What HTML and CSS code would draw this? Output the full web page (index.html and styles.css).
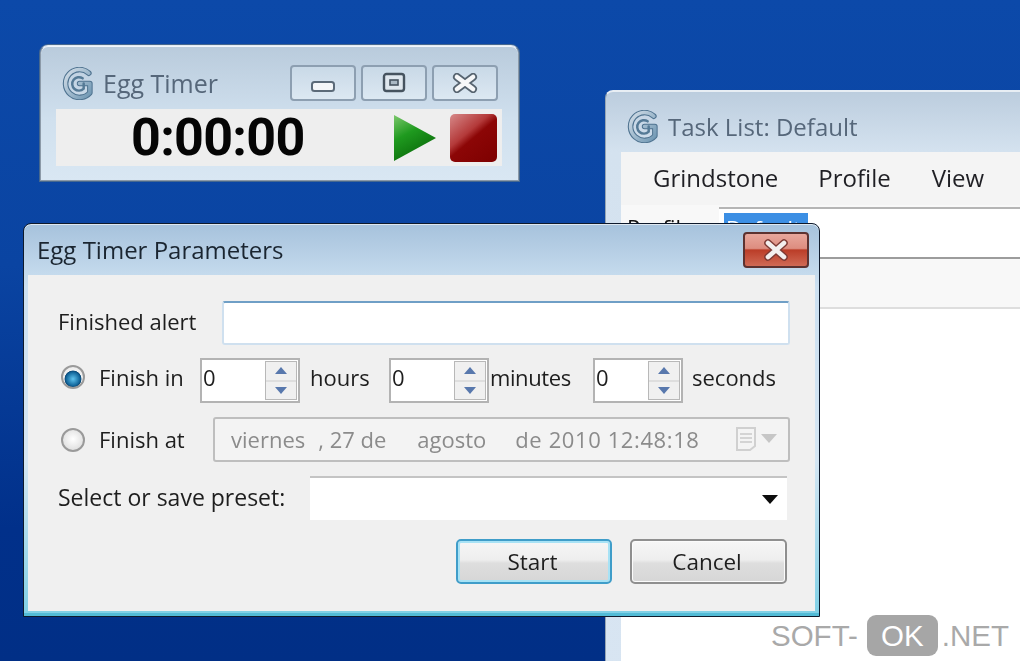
FILE: index.html
```html
<!DOCTYPE html>
<html lang="es">
<head>
  <meta charset="UTF-8">
  <title>Egg Timer Parameters</title>
  <link rel="stylesheet" href="styles.css">
</head>
<body>
  <svg class="defs" width="0" height="0">
    <defs>
      <linearGradient id="logo-fill" x1="0" y1="0" x2="1" y2="1">
        <stop offset="0" stop-color="#d3dee8"/>
        <stop offset="1" stop-color="#6f97b3"/>
      </linearGradient>
      <linearGradient id="play-fill" x1="0" y1="0" x2="0.5" y2="1">
        <stop offset="0" stop-color="#7cc86c"/>
        <stop offset="0.45" stop-color="#1f9a1f"/>
        <stop offset="1" stop-color="#0a6a0a"/>
      </linearGradient>
      <symbol id="logo" viewBox="0 0 30 32">
        <g fill="none" stroke-linecap="round" stroke-linejoin="round">
          <path d="M26 6 A13.5 13.5 0 1 0 27 25 L27 16 L17 16" stroke="#4f7390" stroke-width="5.4"/>
          <path d="M26 6 A13.5 13.5 0 1 0 27 25 L27 16 L17 16" stroke="url(#logo-fill)" stroke-width="3.4"/>
          <path d="M20 11 A6.5 6.5 0 1 0 21 21 L21 16" stroke="#557a96" stroke-width="2.4"/>
        </g>
      </symbol>
    </defs>
  </svg>

  <section class="window egg-window">
    <div class="egg-head">
      <svg class="logo"><use href="#logo"/></svg>
      <span class="win-title">Egg Timer</span>
      <div class="caption-btns">
        <div class="caption-btn"><svg class="icon-min" width="26" height="14" viewBox="0 0 26 14"><rect x="2" y="3" width="22" height="9" rx="2.5" fill="#f4f6f8" stroke="#5b6a78" stroke-width="2"/></svg></div>
        <div class="caption-btn"><svg width="26" height="22" viewBox="0 0 26 22"><rect x="3" y="2" width="20" height="17" rx="2.5" fill="#dfe7ee" stroke="#46535f" stroke-width="2.4"/><rect x="9" y="8" width="8" height="5" fill="#aab8c4" stroke="#46535f" stroke-width="1.6"/></svg></div>
        <div class="caption-btn"><svg width="28" height="20" viewBox="0 0 28 20"><path d="M6 4 L22 16 M22 4 L6 16" stroke="#56636f" stroke-width="8" stroke-linecap="round"/><path d="M6 4 L22 16 M22 4 L6 16" stroke="#f6f7f8" stroke-width="4.6" stroke-linecap="round"/></svg></div>
      </div>
    </div>
    <div class="egg-display">
      <span class="clock">0:00:00</span>
      <svg class="play" width="44" height="48" viewBox="0 0 44 48"><path d="M1 1 L43 24 L1 47 Z" fill="url(#play-fill)"/></svg>
      <div class="stop"></div>
    </div>
  </section>

  <section class="window task-window">
    <div class="task-head">
      <svg class="logo"><use href="#logo"/></svg>
      <span class="win-title">Task List: Default</span>
    </div>
    <div class="task-inner">
      <div class="menu">
        <span class="menu-a">Grindstone</span>
        <span class="menu-b">Profile</span>
        <span class="menu-c">View</span>
      </div>
      <div class="profile-row">
        <span class="profile-label">Profile:</span>
        <div class="profile-input"><span class="profile-sel">Default</span></div>
      </div>
      <div class="task-strip"></div>
      <div class="task-list"></div>
    </div>
  </section>

  <section class="window dialog">
    <div class="dialog-head">
      <span class="dialog-title">Egg Timer Parameters</span>
      <div class="close-btn">
        <svg width="28" height="22" viewBox="0 0 28 22"><path d="M6 4 L22 18 M22 4 L6 18" stroke="#7d3a34" stroke-width="7.5" stroke-linecap="round"/><path d="M6 4 L22 18 M22 4 L6 18" stroke="#f3efee" stroke-width="4.6" stroke-linecap="round"/></svg>
      </div>
    </div>
    <div class="dialog-body">
      <div class="row row-alert">
        <label class="label-alert">Finished alert</label>
        <div class="text-input"></div>
      </div>
      <div class="row row-in">
        <span class="radio radio-on"></span>
        <label class="label-finish">Finish in</label>
        <div class="spin spin-h">
          <span>0</span>
          <div class="spin-btns"><i class="up"></i><i class="down"></i></div>
        </div>
        <span class="unit unit-h">hours</span>
        <div class="spin spin-m">
          <span>0</span>
          <div class="spin-btns"><i class="up"></i><i class="down"></i></div>
        </div>
        <span class="unit unit-m">minutes</span>
        <div class="spin spin-s">
          <span>0</span>
          <div class="spin-btns"><i class="up"></i><i class="down"></i></div>
        </div>
        <span class="unit unit-s">seconds</span>
      </div>
      <div class="row row-at">
        <span class="radio"></span>
        <label class="label-finish label-at">Finish at</label>
        <div class="date-box">
          <span class="d-day">viernes</span>
          <span class="d-num">, 27 de</span>
          <span class="d-month">agosto</span>
          <span class="d-rest">de 2010 12:48:18</span>
          <svg class="d-cal" width="22" height="26" viewBox="0 0 22 26"><path d="M2 2 H20 V20 L15 24 H2 Z" fill="#f4f4f4" stroke="#d0d0d0" stroke-width="2"/><path d="M5 8 H17 M5 12 H17 M5 16 H17" stroke="#d4d4d4" stroke-width="2"/></svg>
          <svg class="d-arrow" width="16" height="9" viewBox="0 0 16 9"><path d="M0 0 H16 L8 9 Z" fill="#c6c6c6"/></svg>
        </div>
      </div>
      <div class="row row-preset">
        <label class="label-preset">Select or save preset:</label>
        <div class="combo">
          <svg width="16" height="9" viewBox="0 0 16 9"><path d="M0 0 H16 L8 9 Z" fill="#0c0c0c"/></svg>
        </div>
      </div>
      <div class="row row-buttons">
        <button class="btn btn-default">Start</button>
        <button class="btn">Cancel</button>
      </div>
    </div>
  </section>

  <div class="watermark">
    <span>SOFT-</span><b>OK</b><span>.NET</span>
  </div>
</body>
</html>
```

FILE: styles.css
```css
html, body {
  margin: 0;
  padding: 0;
  height: 100%;
  overflow: hidden;
}

body {
  position: relative;
  width: 1020px;
  height: 661px;
  background: linear-gradient(180deg, #0c49a9 0%, #0a44a2 40%, #01308a 80%, #012f86 100%);
  font-family: "Open Sans", "Noto Sans", sans-serif;
  color: #1e1e1e;
}

.defs {
  position: absolute;
}

/* windows sit on a desktop, so these three are placed by hand */
.window {
  position: absolute;
  box-sizing: border-box;
  filter: blur(0.7px);
}

.logo {
  width: 31px;
  height: 33px;
  flex: none;
}

.win-title {
  font-size: 24px;
  color: #56677a;
}

/* egg timer */
.egg-window {
  left: 40px;
  top: 45px;
  width: 479px;
  height: 136px;
  padding: 20px 16px 16px 15px;
  background: linear-gradient(180deg, #b9cbdc 0%, #d0e0ee 55%, #d9e7f3 100%);
  border: 1px solid #8c9aa8;
  border-top-color: #e4ebf2;
  border-radius: 8px 8px 0 0;
  box-shadow: 0 0 0 1px #46688f, inset 0 1px 0 #f2f6fa;
}

.egg-head {
  display: flex;
  align-items: center;
  height: 43px;
  box-sizing: border-box;
  padding: 0 0 9px 6px;
}

.egg-head .win-title {
  margin-left: 10px;
  font-size: 25px;
}

.caption-btns {
  display: flex;
  gap: 5px;
  margin-left: auto;
  margin-right: 4px;
}

.caption-btn {
  width: 66px;
  height: 36px;
  box-sizing: border-box;
  display: flex;
  align-items: center;
  justify-content: center;
  border: 2px solid #8d9fb1;
  border-radius: 4px;
  background: linear-gradient(180deg, #c9d9e7 0%, #dce8f2 100%);
}

.icon-min {
  margin-top: 6px;
}

.egg-display {
  display: flex;
  align-items: center;
  height: 57px;
  background: #eeeeee;
  padding-left: 75px;
}

.clock {
  font-family: Roboto, sans-serif;
  font-weight: 700;
  font-size: 52px;
  line-height: 57px;
  letter-spacing: -0.7px;
  color: #050505;
  width: 262px;
}

.play {
  flex: none;
  margin-right: 13px;
}

.stop {
  width: 47px;
  height: 48px;
  border-radius: 5px;
  background: linear-gradient(140deg, #d78a8a 0%, #b43a3a 38%, #8c0606 50%, #7d0000 100%);
}

/* task list behind the dialog */
.task-window {
  left: 605px;
  top: 90px;
  width: 440px;
  height: 600px;
  padding: 0 0 0 15px;
  background: linear-gradient(180deg, #bccdde 0%, #d4e2ef 10%, #d8e5f2 100%);
  border-top: 2px solid #e8eef4;
  border-left: 1px solid #97a6b4;
  border-radius: 8px 0 0 0;
}

.task-head {
  display: flex;
  align-items: center;
  height: 60px;
  box-sizing: border-box;
  margin-left: 6px;
  padding-top: 9px;
}

.task-head .win-title {
  margin-left: 10px;
}

.task-inner {
  background: #ffffff;
  height: 540px;
}

.menu {
  display: flex;
  align-items: center;
  height: 53px;
  box-sizing: border-box;
  padding: 0 0 2px 32px;
  background: #f4f4f4;
  font-size: 24px;
  color: #1f1f24;
}

.menu-b {
  margin-left: 40px;
}

.menu-c {
  margin-left: 41px;
}

.profile-row {
  display: flex;
  height: 52px;
  background: #f8f8f8;
  border-bottom: 2px solid #9c9c9c;
  font-size: 22px;
  color: #111111;
}

.profile-label {
  margin: 0 0 0 6px;
  width: 92px;
  line-height: 45px;
}

.profile-input {
  flex: 1;
  margin-top: 2px;
  background: #ffffff;
  border-top: 2px solid #b5b5b5;
  padding: 4px 0 0 5px;
}

.profile-sel {
  display: block;
  width: 84px;
  height: 40px;
  background: #3c8fe4;
  color: #ffffff;
  line-height: 30px;
  padding-left: 2px;
  box-sizing: border-box;
}

.task-strip {
  height: 48px;
  background: #f8f8f8;
  border-bottom: 2px solid #dedede;
}

.task-list {
  background: #ffffff;
}

/* dialog */
.dialog {
  left: 23px;
  top: 223px;
  width: 797px;
  height: 394px;
  padding: 0 4px 4px 4px;
  border: 1px solid #0e1a2c;
  border-radius: 8px 8px 0 0;
  background: linear-gradient(180deg, #a6c2dc 0%, #cce0f1 16%, #d5e6f3 60%, #7fd0e6 100%);
  box-shadow: inset 0 -3px 0 #52bbd6, inset 0 1px 0 #dfe8f0;
}

.dialog-head {
  display: flex;
  align-items: center;
  height: 51px;
}

.dialog-title {
  margin-left: 9px;
  font-size: 24px;
  color: #1a2530;
}

.close-btn {
  margin-left: auto;
  margin-right: 6px;
  width: 66px;
  height: 36px;
  box-sizing: border-box;
  display: flex;
  align-items: center;
  justify-content: center;
  border: 2px solid #5d3230;
  border-radius: 4px;
  background: linear-gradient(180deg, #e8a79c 0%, #dd8d80 45%, #bb3d28 50%, #d06a55 100%);
}

.dialog-body {
  height: 336px;
  box-sizing: border-box;
  padding: 26px 25px 0 30px;
  background: #f0f0f0;
  font-size: 22px;
}

.row {
  display: flex;
  align-items: center;
}

label {
  white-space: nowrap;
}

.row-alert {
  height: 44px;
}

.label-alert {
  width: 164px;
  margin-bottom: 4px;
}

.text-input {
  flex: 1;
  height: 44px;
  box-sizing: border-box;
  background: #ffffff;
  border: 2px solid #cfe0ef;
  border-top-color: #6f9fc6;
  border-radius: 3px;
}

.row-in {
  height: 45px;
  margin-top: 13px;
  padding-left: 3px;
}

.row-in .radio,
.row-in label,
.row-in .unit {
  margin-bottom: 8px;
}

.radio {
  flex: none;
  width: 24px;
  height: 24px;
  box-sizing: border-box;
  border-radius: 50%;
  border: 2px solid #9a9a9a;
  background: radial-gradient(circle at 50% 45%, #ffffff 0%, #d6d6d6 100%);
}

.radio-on {
  background: radial-gradient(circle at 50% 60%, #5fc3ee 0%, #14699e 42%, #0c4a78 52%, #f2f2f2 56%, #e4e4e4 100%);
}

.label-finish {
  margin-left: 14px;
  width: 101px;
}

.spin {
  flex: none;
  display: flex;
  align-items: center;
  justify-content: space-between;
  height: 45px;
  width: 100px;
  box-sizing: border-box;
  border: 2px solid #b3b3b3;
  background: #ffffff;
  padding: 0 1px 0 1px;
}

.spin span {
  margin-bottom: 8px;
}

.spin-btns {
  display: flex;
  flex-direction: column;
  width: 30px;
  height: 37px;
  border: 1px solid #b8b8b8;
  background: #dedede;
  gap: 2px;
}

.spin-btns i {
  flex: 1;
  display: block;
  background: #f0f0f0;
  position: relative;
}

.spin-btns .up::after,
.spin-btns .down::after {
  content: "";
  position: absolute;
  left: 9px;
  top: 5px;
  border-left: 6px solid transparent;
  border-right: 6px solid transparent;
}

.spin-btns .up::after {
  border-bottom: 7px solid #5878ad;
}

.spin-btns .down::after {
  border-top: 7px solid #5878ad;
}

.spin-s {
  width: 90px;
}

.unit {
  white-space: nowrap;
}

.unit-h {
  margin-left: 10px;
  width: 79px;
}

.unit-m {
  margin-left: 1px;
  width: 103px;
  letter-spacing: -0.4px;
}

.unit-s {
  margin-left: 9px;
}

.row-at {
  height: 45px;
  margin-top: 14px;
  padding-left: 3px;
}

.row-at label {
  margin-bottom: 2px;
}

.label-at {
  width: 114px;
}

.date-box {
  flex: 1;
  display: flex;
  align-items: center;
  height: 45px;
  box-sizing: border-box;
  background: #f3f3f3;
  border: 2px solid #bebebe;
  border-radius: 3px;
  color: #8b8b8b;
  padding: 0 0 2px 16px;
}

.d-num {
  margin-left: 13px;
}

.d-month {
  margin-left: 31px;
}

.d-rest {
  margin-left: 29px;
  letter-spacing: 0.6px;
}

.d-cal {
  margin-left: auto;
}

.d-arrow {
  margin: 0 11px 0 4px;
}

.row-preset {
  height: 44px;
  margin-top: 14px;
}

.label-preset {
  width: 252px;
  font-size: 23px;
  margin-bottom: 2px;
}

.combo {
  flex: 1;
  height: 44px;
  margin-right: 3px;
  box-sizing: border-box;
  display: flex;
  align-items: center;
  justify-content: flex-end;
  padding-right: 9px;
  background: #ffffff;
  border-top: 2px solid #c4c4c4;
}

.row-buttons {
  justify-content: flex-end;
  gap: 18px;
  margin-top: 19px;
  margin-right: 3px;
}

.btn {
  width: 157px;
  height: 45px;
  box-sizing: border-box;
  font: inherit;
  font-size: 22.5px;
  color: #1e1e1e;
  border: 2px solid #8f8f8f;
  border-radius: 5px;
  background: linear-gradient(180deg, #f6f6f6 0%, #eeeeee 46%, #dedede 54%, #d6d6d6 100%);
  box-shadow: inset 0 0 0 1px #fbfbfb;
  padding: 0 3px 0 0;
}

.btn-default {
  width: 156px;
  border-color: #3f9dc9;
  box-shadow: inset 0 0 0 2px #a8e2f5;
}

/* site stamp in the corner */
.watermark {
  position: absolute;
  left: 771px;
  top: 615px;
  display: flex;
  align-items: center;
  height: 41px;
  font-family: "Liberation Sans", sans-serif;
  font-size: 29.5px;
  color: #a9a9a9;
}

.watermark b {
  display: block;
  font-weight: 400;
  width: 71px;
  height: 41px;
  line-height: 41px;
  margin: 0 4px 0 9px;
  text-align: center;
  border-radius: 9px;
  background: #a6a6a6;
  color: #ffffff;
}
```
